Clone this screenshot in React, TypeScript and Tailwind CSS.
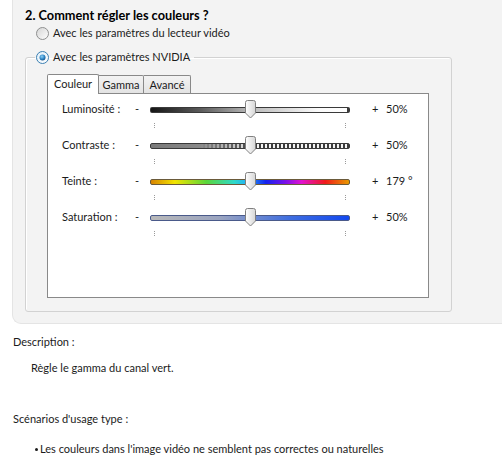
import React from 'react';

type SliderDef = {
  label: string;
  value: string;
  track: string;
};

const sliders: SliderDef[] = [
  {
    label: 'Luminosité :',
    value: '50%',
    track: 'bg-[linear-gradient(to_right,#151515,#5a5a5a_25%,#b8b8b8_50%,#fafafa_85%,#ffffff)] border-[#3a3a3a] border-r-[3px]',
  },
  {
    label: 'Contraste :',
    value: '50%',
    track:
      'bg-[linear-gradient(to_right,#7a7a7a,#8a8a8a_25%,rgba(120,120,120,0)_55%),repeating-linear-gradient(90deg,#3c3c3c_0_2px,#f4f4f4_2px_4px)] border-[#3a3a3a]',
  },
  {
    label: 'Teinte :',
    value: '179 °',
    track:
      'bg-[linear-gradient(to_right,#d88400,#f2e400_12%,#5ad63a_28%,#2fd9c8_42%,#22b4f4_48%,#1422ee_58%,#7a10e8_68%,#e012d0_76%,#f01a1a_88%,#e89a00_100%)] border-[#6a5a3a]',
  },
  {
    label: 'Saturation :',
    value: '50%',
    track: 'bg-[linear-gradient(to_right,#b8b8b8,#9aa4c0_35%,#3f6ee0_70%,#1248f0)] border-[#4a5a8a]',
  },
];

const Thumb = () => (
  <svg width="11" height="19" viewBox="0 0 11 19" className="absolute left-[95px] top-[-1px]">
    <defs>
      <linearGradient id="thumbFill" x1="0" x2="1" y1="0" y2="0">
        <stop offset="0" stopColor="#ffffff" />
        <stop offset="1" stopColor="#d6d6d6" />
      </linearGradient>
    </defs>
    <path
      d="M0.5 2.5 Q0.5 0.5 2.5 0.5 H8.5 Q10.5 0.5 10.5 2.5 V13 L5.5 18 L0.5 13 Z"
      fill="url(#thumbFill)"
      stroke="#808080"
    />
  </svg>
);

const Slider = ({ track }: { track: string }) => (
  <div className="relative w-[200px] h-[30px]">
    <div className={`absolute left-0 top-[6px] w-[200px] h-[6px] rounded-[2px] border ${track}`} />
    <Thumb />
    <div className="absolute left-[4px] top-[22px] h-[5px] w-px border-l border-dotted border-[#9a9a9a]" />
    <div className="absolute left-[195px] top-[22px] h-[5px] w-px border-l border-dotted border-[#9a9a9a]" />
  </div>
);

const Radio = ({ checked }: { checked?: boolean }) => (
  <svg width="13" height="13" viewBox="0 0 13 13" className="shrink-0">
    <defs>
      <linearGradient id={checked ? 'rOn' : 'rOff'} x1="0" y1="0" x2="1" y2="1">
        <stop offset="0" stopColor={checked ? '#dfeef9' : '#d4d4d4'} />
        <stop offset="1" stopColor="#ffffff" />
      </linearGradient>
      <radialGradient id="rDot" cx="0.4" cy="0.35" r="0.7">
        <stop offset="0" stopColor="#8fd0f6" />
        <stop offset="0.6" stopColor="#2e86c4" />
        <stop offset="1" stopColor="#154e86" />
      </radialGradient>
    </defs>
    <circle cx="6.5" cy="6.5" r="6" fill={`url(#${checked ? 'rOn' : 'rOff'})`} stroke={checked ? '#3c7fb1' : '#8e8f8f'} />
    {checked && <circle cx="6.5" cy="6.5" r="3" fill="url(#rDot)" />}
  </svg>
);

export default function App() {
  return (
    <div className="w-[502px] h-[470px] bg-white overflow-hidden text-[11px] text-[#1b1b1b] font-['Lato',sans-serif]">
      <div className="ml-[12px] bg-[#f3f3f3] rounded-bl-[9px] border-l border-b border-[#e4e4e4] pl-[12px] pt-[7px] pb-[11px]">
        <div className="h-[16px] leading-[16px] text-[12.75px] font-bold text-black">2. Comment régler les couleurs ?</div>
        <label className="mt-[2px] ml-[11px] h-[16px] flex items-center gap-[4px] leading-[16px]">
          <Radio />
          <span>Avec les paramètres du lecteur vidéo</span>
        </label>
        <fieldset className="mt-[8px] w-[427px] border border-[#d2d2d2] rounded-[3px] p-0 m-0 shadow-[inset_1px_1px_0_#ffffff]">
          <legend className="ml-[9px] pl-[1px] pr-[4px] h-[16px] flex items-center gap-[4px] leading-[16px]">
            <Radio checked />
            <span>Avec les paramètres NVIDIA</span>
          </legend>
          <div className="ml-[21px] mt-[8px] mb-[13px] w-[382px]">
            <div className="flex items-end h-[20px]">
              <div className="h-[20px] w-[52px] bg-white border border-b-0 border-[#898989] rounded-t-[2px] text-center leading-[17px] relative top-px z-10">
                Couleur
              </div>
              <div className="h-[18px] w-[45px] bg-[linear-gradient(#f3f3f3,#e3e3e3)] border border-b-0 border-l-0 border-[#898989] rounded-tr-[2px] text-center leading-[18px]">
                Gamma
              </div>
              <div className="h-[18px] w-[47px] bg-[linear-gradient(#f3f3f3,#e3e3e3)] border border-b-0 border-l-0 border-[#898989] rounded-tr-[2px] text-center leading-[18px]">
                Avancé
              </div>
            </div>
            <div className="h-[205px] bg-white border border-[#898989] pl-[14px] pt-[7px]">
              {sliders.map((s) => (
                <div key={s.label} className="flex items-start h-[36px]">
                  <div className="w-[73px] leading-[16px]">{s.label}</div>
                  <div className="w-[15px] leading-[16px]">-</div>
                  <Slider track={s.track} />
                  <div className="ml-[22px] w-[14px] leading-[16px]">+</div>
                  <div className="leading-[16px]">{s.value}</div>
                </div>
              ))}
            </div>
          </div>
        </fieldset>
      </div>
      <div className="pl-[13px] mt-[10px] leading-[16px]">Description :</div>
      <div className="pl-[31px] mt-[10px] leading-[16px]">Règle le gamma du canal vert.</div>
      <div className="pl-[13px] mt-[35px] leading-[16px]">Scénarios d'usage type :</div>
      <div className="pl-[35px] mt-[14px] leading-[16px] flex items-center gap-[2px]">
        <span className="inline-block w-[3px] h-[3px] rounded-full bg-[#1b1b1b]" />
        <span>Les couleurs dans l'image vidéo ne semblent pas correctes ou naturelles</span>
      </div>
    </div>
  );
}
